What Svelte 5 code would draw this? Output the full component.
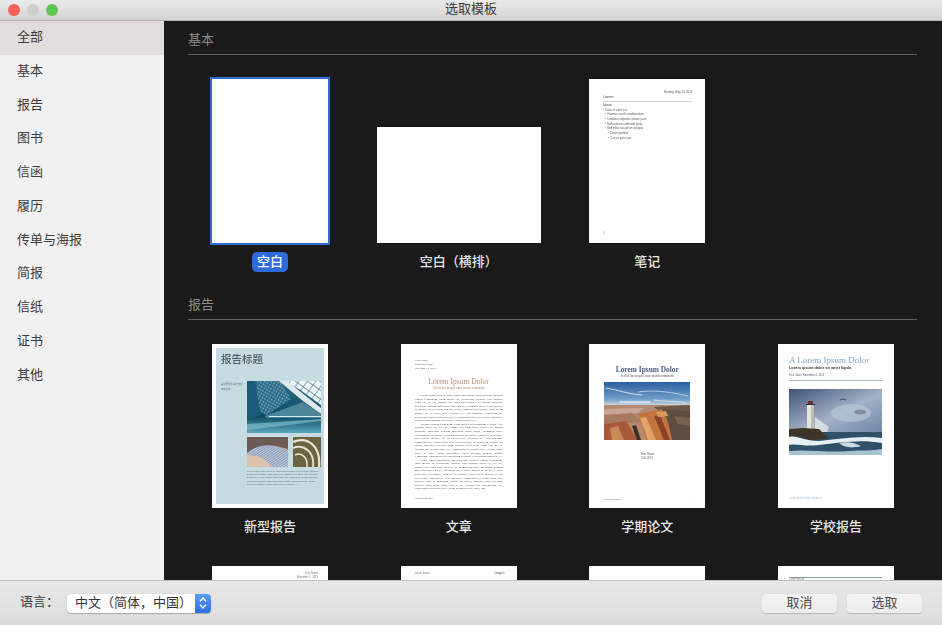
<script>
    const categories = ["全部", "基本", "报告", "图书", "信函", "履历", "传单与海报", "简报", "信纸", "证书", "其他"];

    const lorem =
        "Lorem ipsum dolor sit amet, ligula suspendisse nulla pretium, rhoncus tempor fermentum, enim integer ad vestibulum volutpat. Nisl rhoncus turpis est, vel elit, congue wisi enim nunc ultricies sit, magna tincidunt. Maecenas aliquam maecenas ligula nostra, accumsan taciti. Sociis mauris in integer, a dolor netus non dui aliquet, sagittis felis sodales, dolor sociis mauris, vel eu libero cras. Faucibus at. Arcu habitasse elementum est, ipsum purus pede porttitor class, ut adipiscing, aliquet sed auctor, imperdiet arcu per diam dapibus libero duis. Enim eros in vel, volutpat nec pellentesque leo, temporibus scelerisque nec.";
    const longLorem = lorem + " " + lorem;
</script>

<div class="window">
    <header class="titlebar">
        <div class="lights">
            <span class="light red"></span>
            <span class="light grey"></span>
            <span class="light green"></span>
        </div>
        <div class="title">选取模板</div>
    </header>

    <div class="middle">
        <nav class="sidebar">
            {#each categories as item, i}
                <div class="cat" class:active={i === 0}>{item}</div>
            {/each}
        </nav>

        <main class="content">
            <h2>基本</h2>
            <div class="grid">
                <div class="card">
                    <div class="slot"><div class="page selected"></div></div>
                    <div class="label pill">空白</div>
                </div>
                <div class="card">
                    <div class="slot"><div class="page wide"></div></div>
                    <div class="label">空白（横排）</div>
                </div>
                <div class="card">
                    <div class="slot">
                        <div class="page notes">
                            <div class="n-date">Monday, May 13, 2013</div>
                            <div class="n-title">Lorem</div>
                            <div class="n-sub">Ipsum</div>
                            <div class="n-li">Dolor sit amet est</div>
                            <div class="n-li l2">Vivamus iaculis condimentum</div>
                            <div class="n-li l2">Curabitur vulputate ornare justo</div>
                            <div class="n-li l2">Nulla rutrum commodo ligula</div>
                            <div class="n-li l2">Sed tellus suscipit in volutpat</div>
                            <div class="n-li l3">Donec porttitor</div>
                            <div class="n-li l3">Cursus quis nunc</div>
                            <div class="n-num">1</div>
                        </div>
                    </div>
                    <div class="label">笔记</div>
                </div>
            </div>

            <h2 class="second">报告</h2>
            <div class="grid">
                <div class="card">
                    <div class="slot">
                        <div class="page report">
                            <div class="panel">
                                <div class="r-title">报告标题</div>
                                <div class="r-body">
                                    <div class="r-cap">副标题文字占位内容<br />请在此处</div>
                                    <div>
                                        <svg class="r-big" viewBox="0 0 74 52" preserveAspectRatio="none">
                                            <defs>
                                                <linearGradient id="hall" x1="0" y1="0" x2="0" y2="1">
                                                    <stop offset="0" stop-color="#2b6f8c" />
                                                    <stop offset="0.68" stop-color="#0f4a62" />
                                                    <stop offset="1" stop-color="#5ba6ba" />
                                                </linearGradient>
                                                <pattern id="lattice" width="7" height="7" patternUnits="userSpaceOnUse" patternTransform="rotate(35)">
                                                    <rect width="7" height="7" fill="#f1f6f7" />
                                                    <path d="M0 0H7M0 0V7" stroke="#4d7f92" stroke-width="1.4" />
                                                </pattern>
                                                <pattern id="ribs" width="3" height="3" patternUnits="userSpaceOnUse" patternTransform="rotate(30)">
                                                    <rect width="3" height="3" fill="#2a6a86" />
                                                    <rect width="1.4" height="1.4" fill="#8fb6c4" />
                                                </pattern>
                                            </defs>
                                            <rect width="74" height="52" fill="url(#hall)" />
                                            <polygon points="10,0 33,0 44,18 20,34 10,30" fill="url(#ribs)" />
                                            <polygon points="36,0 74,0 74,24 52,8" fill="url(#lattice)" />
                                            <polygon points="32,0 40,0 74,27 74,33 56,20" fill="#dfe9ea" />
                                            <polygon points="0,0 8,0 14,34 0,38" fill="#1c5a78" />
                                            <polygon points="18,35 56,21 74,33 74,37 20,37" fill="#4d8598" />
                                            <rect x="22" y="35" width="52" height="1" fill="#d9e8ea" />
                                            <polygon points="0,43 74,38 74,40 0,49" fill="#7cbacb" opacity="0.7" />
                                        </svg>
                                        <div class="r-pair">
                                            <svg viewBox="0 0 41 30" preserveAspectRatio="none">
                                                <defs>
                                                    <pattern id="slats" width="2" height="2" patternUnits="userSpaceOnUse" patternTransform="rotate(55)">
                                                        <rect width="2" height="2" fill="#8a9ab2" />
                                                        <rect width="1" height="2" fill="#c0cde0" />
                                                    </pattern>
                                                </defs>
                                                <rect width="41" height="30" fill="#b79a8a" />
                                                <path d="M0 0H41V12C28 8 10 8 0 16Z" fill="#6d5a55" />
                                                <path d="M0 16C12 6 28 6 41 14V30H24C20 22 10 18 0 18Z" fill="url(#slats)" />
                                                <path d="M0 18C10 18 20 22 24 30H0Z" fill="#dcc3b0" />
                                            </svg>
                                            <svg viewBox="0 0 28 30" preserveAspectRatio="none">
                                                <rect width="28" height="30" fill="#6c6440" />
                                                <g fill="none" stroke="#e9e4cf">
                                                    <path d="M0 5C14 -1 28 8 26 30" stroke-width="2.2" />
                                                    <path d="M0 11C10 7 22 14 20 30" stroke-width="1.8" />
                                                    <path d="M2 18C8 15 15 20 14 30" stroke-width="1.5" />
                                                </g>
                                            </svg>
                                        </div>
                                        <p class="r-text">{lorem.slice(0, 330)}</p>
                                    </div>
                                </div>
                            </div>
                        </div>
                    </div>
                    <div class="label">新型报告</div>
                </div>

                <div class="card">
                    <div class="slot">
                        <div class="page essay">
                            <div class="e-head">Your Name<br />Instructor Name<br />November 1, 2013</div>
                            <div class="e-title">Lorem Ipsum Dolor</div>
                            <div class="e-sub">Sed id lorem quis nunc mattis commodo</div>
                            <p>{longLorem.slice(0, 570)}</p>
                            <p>{longLorem.slice(60, 780)}</p>
                            <p>{longLorem.slice(20, 660)}</p>
                            <div class="e-foot">Vestibulum ante</div>
                        </div>
                    </div>
                    <div class="label">文章</div>
                </div>

                <div class="card">
                    <div class="slot">
                        <div class="page paper">
                            <div class="p-title">Lorem Ipsum Dolor</div>
                            <div class="p-sub">Sed id lorem quis nunc mattis commodo</div>
                            <svg class="p-photo" viewBox="0 0 86 58" preserveAspectRatio="none">
                                <defs>
                                    <linearGradient id="sky" x1="0" y1="0" x2="0" y2="1">
                                        <stop offset="0" stop-color="#2b5f9f" />
                                        <stop offset="0.7" stop-color="#6f9cc8" />
                                        <stop offset="1" stop-color="#d4dce0" />
                                    </linearGradient>
                                </defs>
                                <rect width="86" height="24" fill="url(#sky)" />
                                <g fill="none" stroke="#dbe8f3" stroke-linecap="round">
                                    <path d="M2 6C14 8 24 12 38 13" stroke-width="0.9" />
                                    <path d="M34 10C48 8 62 9 84 14" stroke-width="0.7" />
                                    <path d="M16 20H46" stroke-width="1.4" />
                                    <path d="M50 18C60 20 70 18 82 21" stroke-width="0.8" />
                                </g>
                                <rect y="23" width="86" height="35" fill="#b58a72" />
                                <polygon points="50,25 86,23 86,30 54,28" fill="#6a5a4c" />
                                <polygon points="0,27 40,26 34,31 0,33" fill="#c9a594" />
                                <polygon points="0,33 28,31 38,40 20,41 0,42" fill="#a97a62" />
                                <polygon points="34,32 58,27 66,40 70,58 42,58" fill="#c4753f" />
                                <polygon points="58,27 86,29 86,58 68,58 64,40" fill="#5d4c42" />
                                <polygon points="70,34 86,36 86,44 74,42" fill="#78624f" />
                                <polygon points="0,42 22,39 34,58 0,58" fill="#a8593a" />
                                <polygon points="6,46 14,44 20,58 8,58" fill="#c98a5a" />
                                <polygon points="36,36 42,35 52,58 44,58" fill="#e0a36c" />
                                <polygon points="50,34 56,33 66,58 60,58" fill="#8a4326" />
                                <polygon points="28,44 32,43 37,58 33,58" fill="#3f2d26" />
                                <polygon points="52,30 62,29 64,34 54,35" fill="#d99a62" />
                            </svg>
                            <div class="p-name">Your Name<br />Fall 2013</div>
                            <div class="p-foot"><span>Lorem Ipsum Dolor</span><span>1</span></div>
                        </div>
                    </div>
                    <div class="label">学期论文</div>
                </div>

                <div class="card">
                    <div class="slot">
                        <div class="page school">
                            <div class="s-title">A Lorem Ipsum Dolor</div>
                            <div class="s-sub">Lorem ipsum dolor sit amet ligula</div>
                            <div class="s-date">Your Class: November 4, 2013</div>
                            <svg class="s-photo" viewBox="0 0 93 66" preserveAspectRatio="none">
                                <defs>
                                    <linearGradient id="storm" x1="0" y1="0" x2="1" y2="1">
                                        <stop offset="0" stop-color="#3f5378" />
                                        <stop offset="0.55" stop-color="#a3b2c8" />
                                        <stop offset="1" stop-color="#6d84a3" />
                                    </linearGradient>
                                </defs>
                                <rect width="93" height="44" fill="url(#storm)" />
                                <ellipse cx="62" cy="24" rx="20" ry="9" fill="#bcc9d8" opacity="0.6" />
                                <ellipse cx="71" cy="23" rx="6" ry="2.5" fill="#7d8fa8" />
                                <path d="M51 11L54 10L57 11" fill="none" stroke="#3a4150" stroke-width="0.9" />
                                <rect x="18" y="15" width="7" height="26" fill="#e6e6da" />
                                <rect x="22" y="15" width="3" height="26" fill="#bdbfb4" />
                                <rect x="19" y="12" width="5" height="3" fill="#6b2f33" />
                                <rect x="17" y="15" width="9" height="1" fill="#2f3340" />
                                <polygon points="26,28 40,38 38,44 26,42" fill="#dfe5ea" opacity="0.85" />
                                <rect y="43" width="93" height="23" fill="#2f5068" />
                                <polygon points="0,40 14,39 30,40 40,50 20,51 8,47 0,48" fill="#3f3428" />
                                <path d="M0 48C8 46 14 52 30 52C50 50 70 46 93 49V54C70 50 50 54 30 56C16 58 6 54 0 56Z" fill="#e8eff3" />
                                <path d="M50 54C60 52 66 54 72 57C62 60 54 58 50 54Z" fill="#c7dae2" />
                                <path d="M0 62C20 60 40 64 60 62C72 61 84 62 93 60V66H0Z" fill="#a9c2cf" />
                            </svg>
                            <div class="s-foot">Lorem Ipsum Dolor Sit Amet</div>
                        </div>
                    </div>
                    <div class="label">学校报告</div>
                </div>

                <div class="card">
                    <div class="slot">
                        <div class="page peek right"><div>Your Name<br />November 1, 2013</div></div>
                    </div>
                </div>
                <div class="card">
                    <div class="slot">
                        <div class="page peek split"><span>Lorem Ipsum</span><b>Design 1</b></div>
                    </div>
                </div>
                <div class="card"><div class="slot"><div class="page"></div></div></div>
                <div class="card">
                    <div class="slot">
                        <div class="page peek ruled"><div class="rule"></div><div>Lorem Ipsum</div></div>
                    </div>
                </div>
            </div>
        </main>
    </div>

    <footer class="footer">
        <span class="lang">语言：</span>
        <div class="select">
            <span class="value">中文（简体，中国）</span>
            <span class="stepper">
                <svg width="8" height="14" viewBox="0 0 8 14">
                    <path d="M1 5.2L4 2L7 5.2M1 8.8L4 12L7 8.8" fill="none" stroke="#fff" stroke-width="1.3" />
                </svg>
            </span>
        </div>
        <div class="spacer"></div>
        <button>取消</button>
        <button>选取</button>
    </footer>
</div>

<style>
    :global(body) {
        margin: 0;
        background: #1a1a1a;
    }

    .window {
        width: 942px;
        height: 625px;
        display: flex;
        flex-direction: column;
        overflow: hidden;
        font-family: "Liberation Sans", "Noto Sans CJK SC", sans-serif;
    }

    .titlebar {
        height: 21px;
        flex: none;
        display: grid;
        grid-template-columns: 1fr auto 1fr;
        align-items: center;
        background: linear-gradient(#ebebeb, #d3d3d3);
        border-bottom: 1px solid #b4b4b4;
        box-sizing: border-box;
    }

    .lights {
        display: flex;
        gap: 7px;
        padding-left: 7.5px;
    }

    .light {
        width: 12px;
        height: 12px;
        border-radius: 50%;
    }

    .red { background: #f4605a; }
    .grey { background: #cfcdcd; }
    .green { background: #5dc850; }

    .title {
        font-size: 13px;
        line-height: 18px;
        padding-bottom: 2px;
        color: #3a3a3a;
    }

    .middle {
        flex: 1;
        display: flex;
        min-height: 0;
    }

    .sidebar {
        width: 164px;
        flex: none;
        background: #f2f1f1;
    }

    .cat {
        height: 33.75px;
        line-height: 32px;
        padding-left: 17px;
        font-size: 13px;
        color: #3c3c3c;
    }

    .cat.active {
        background: #e0dddc;
    }

    .content {
        flex: 1;
        min-width: 0;
        overflow: hidden;
        background: #1a1a1a;
        padding-left: 11.67px;
    }

    h2 {
        margin: 0 25px 0 12.33px;
        height: 34px;
        box-sizing: border-box;
        padding-top: 10px;
        line-height: 18px;
        font-size: 13px;
        font-weight: 400;
        color: #8b8b8b;
        border-bottom: 1px solid #626262;
    }

    h2.second {
        margin-top: 14px;
    }

    .grid {
        display: grid;
        grid-template-columns: repeat(4, 188.67px);
        row-gap: 29px;
        padding-top: 24px;
    }

    .card {
        display: flex;
        flex-direction: column;
        align-items: center;
    }

    .slot {
        height: 164px;
        display: flex;
        align-items: flex-end;
    }

    .page {
        width: 116px;
        height: 164px;
        box-sizing: border-box;
        background: #fff;
        color: #555;
        overflow: hidden;
    }

    /* the thumbnails are soft previews in the original */
    .page > :global(*) {
        filter: blur(0.35px);
    }

    .page.wide {
        width: 164px;
        height: 116px;
    }

    .page.selected {
        box-shadow: 0 0 0 2px #2f6ccb;
    }

    .label {
        margin-top: 9px;
        height: 20px;
        line-height: 20px;
        padding: 0 5px;
        font-size: 13px;
        font-weight: 500;
        color: #e6e6e6;
    }

    .pill {
        background: #2d6bdc;
        color: #fff;
        border-radius: 5px;
    }

    /* notes */
    .notes {
        padding: 11px 13px 0 14px;
        font-size: 2.8px;
        color: #555;
        display: flex;
        flex-direction: column;
    }

    .n-date {
        text-align: right;
        height: 4px;
    }

    .n-title {
        height: 8px;
        box-sizing: border-box;
        font-size: 3.6px;
        line-height: 6px;
        color: #333;
        border-bottom: 0.5px solid #d6d6d6;
    }

    .n-sub {
        margin-top: 1px;
        height: 4.6px;
        font-size: 3.2px;
        color: #444;
    }

    .n-li {
        height: 4.7px;
        line-height: 4.7px;
    }

    .n-li::before {
        content: "• ";
    }

    .l2 { padding-left: 2px; }
    .l3 { padding-left: 5px; }

    .n-num {
        margin-top: auto;
        padding-bottom: 8px;
    }

    /* report */
    .report {
        padding: 4px;
    }

    .panel {
        height: 100%;
        box-sizing: border-box;
        background: #c6dbe2;
        padding: 5px 3px 0 5px;
    }

    .r-title {
        height: 13px;
        line-height: 13px;
        font-size: 10.5px;
        font-weight: 500;
        color: #4e5a60;
    }

    .r-body {
        display: grid;
        grid-template-columns: 26px 74px;
        margin-top: 15px;
    }

    .r-cap {
        font-size: 2.4px;
        line-height: 4.5px;
        padding-top: 2px;
        color: #66777e;
    }

    .r-big {
        display: block;
        width: 74px;
        height: 52px;
    }

    .r-pair {
        display: grid;
        grid-template-columns: 41px 28px;
        justify-content: space-between;
        margin-top: 4px;
    }

    .r-pair svg {
        display: block;
        width: 100%;
        height: 30px;
    }

    .r-text {
        margin: 3px 0 0;
        font-size: 2.3px;
        line-height: 3.2px;
        color: #5a6c73;
    }

    /* essay */
    .essay {
        padding: 14px 14px 0;
        font-family: "Liberation Serif", serif;
        font-size: 2.9px;
        line-height: 3.6px;
        color: #444;
    }

    .e-head {
        line-height: 4px;
    }

    .e-title {
        margin-top: 6.5px;
        text-align: center;
        font-size: 7.6px;
        line-height: 9px;
        color: #b98a70;
    }

    .e-sub {
        text-align: center;
        font-size: 3.2px;
        line-height: 4px;
        color: #a08878;
        margin-bottom: 4.5px;
    }

    .essay p {
        margin: 0;
        text-align: justify;
        text-indent: 5px;
    }

    .e-foot {
        margin-top: 6px;
    }

    /* term paper */
    .paper {
        padding: 21px 0 0;
        font-family: "Liberation Serif", serif;
        color: #555;
        display: flex;
        flex-direction: column;
        align-items: center;
    }

    .p-title {
        font-size: 7.4px;
        line-height: 9px;
        font-weight: 700;
        color: #4c5c82;
    }

    .p-sub {
        font-size: 3.3px;
        line-height: 5px;
        color: #555;
        margin-bottom: 3px;
    }

    .p-photo {
        display: block;
        width: 86px;
        height: 58px;
    }

    .p-name {
        margin-top: 12px;
        text-align: center;
        font-size: 3px;
        line-height: 4.4px;
    }

    .p-foot {
        margin-top: auto;
        margin-bottom: 8px;
        width: 88px;
        display: flex;
        justify-content: space-between;
        font-size: 2.2px;
    }

    /* school report */
    .school {
        padding: 11px 11px 0;
        display: flex;
        flex-direction: column;
        font-size: 2.6px;
        color: #556;
    }

    .s-title {
        font-family: "Liberation Serif", serif;
        font-size: 9px;
        line-height: 10px;
        color: #7da6c0;
        white-space: nowrap;
    }

    .s-sub {
        font-size: 3.9px;
        line-height: 6px;
        font-weight: 700;
        color: #333;
        white-space: nowrap;
    }

    .s-date {
        margin-top: 1.5px;
        line-height: 5px;
        border-bottom: 0.6px solid #a9bdc9;
        padding-bottom: 2px;
        margin-bottom: 8px;
    }

    .s-photo {
        display: block;
        width: 93px;
        height: 66px;
    }

    .s-foot {
        margin-top: auto;
        margin-bottom: 8px;
        color: #a9c2d0;
        font-size: 2.6px;
    }

    /* third row, only the top of each page shows */
    .peek {
        font-size: 2.6px;
        line-height: 4px;
        color: #777;
    }

    .right {
        padding: 6px 10px 0 0;
        text-align: right;
    }

    .split {
        padding: 6px 12px 0 14px;
        display: flex;
        justify-content: space-between;
    }

    .split b {
        color: #333;
        font-weight: 400;
    }

    .ruled {
        padding: 11px 12px 0 11px;
    }

    .rule {
        border-top: 0.7px solid #8d9ba5;
    }

    .footer {
        height: 45px;
        flex: none;
        box-sizing: border-box;
        display: flex;
        align-items: center;
        padding: 0 20px;
        background: linear-gradient(#e8e8e8, #dcdcdc);
        border-top: 1px solid #c2c2c2;
    }

    .lang {
        width: 47px;
        font-size: 13px;
        line-height: 18px;
        padding-bottom: 2px;
        color: #3a3a3a;
    }

    .select {
        width: 144px;
        height: 19px;
        display: flex;
        align-items: stretch;
        background: #fff;
        border-radius: 4px;
        overflow: hidden;
        box-shadow: 0 0.5px 1px rgba(0, 0, 0, 0.25);
    }

    .value {
        flex: 1;
        padding-left: 8px;
        font-size: 13px;
        line-height: 18px;
        color: #333;
        white-space: nowrap;
    }

    .stepper {
        width: 16px;
        display: flex;
        align-items: center;
        justify-content: center;
        background: linear-gradient(#5d9df5, #2d6fe0);
    }

    .spacer {
        flex: 1;
    }

    button {
        width: 75px;
        height: 19px;
        margin-left: 10px;
        padding: 0 0 1px;
        border: 0;
        border-radius: 4px;
        font: inherit;
        font-size: 13px;
        line-height: 18px;
        color: #4a4a4a;
        background: linear-gradient(#f5f5f5, #ececec);
        box-shadow: 0 0.5px 1px rgba(0, 0, 0, 0.18);
    }
</style>
